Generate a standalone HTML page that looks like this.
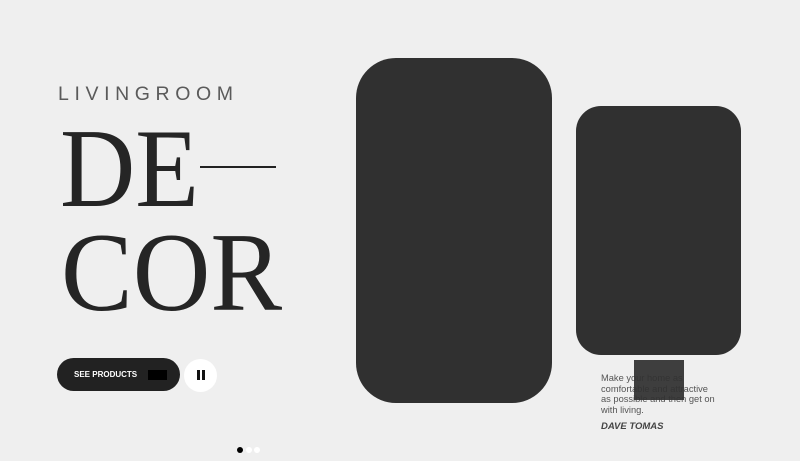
<!DOCTYPE html>
<html><head><meta charset="utf-8"><style>
*{margin:0;padding:0;box-sizing:border-box}
body{width:800px;height:461px;background:#efefef;position:relative;overflow:hidden;font-family:"Liberation Sans",sans-serif}
.a{position:absolute}
.liv{left:58px;top:83px;font-size:19.5px;letter-spacing:5.6px;color:#5a5a5a;white-space:nowrap;line-height:22px}
.big{font-family:"Liberation Serif",serif;font-size:112px;color:#252525;line-height:1;white-space:nowrap;transform-origin:0 0}
</style></head><body>
<div class="a liv">LIVINGROOM</div>
<div class="a big" style="left:60px;top:113px;transform:scaleX(0.93)">DE</div>
<div class="a" style="left:200px;top:166px;width:76px;height:2px;background:#222"></div>
<div class="a big" style="left:61px;top:217px;transform:scaleX(0.96)">COR</div>

<div class="a" style="left:57px;top:358px;width:123px;height:33px;border-radius:17px;background:#222"></div>
<div class="a" style="left:74px;top:370px;font-size:8px;font-weight:bold;color:#fff;line-height:9px">SEE PRODUCTS</div>
<div class="a" style="left:148px;top:370px;width:19px;height:10px;background:#000"></div>
<div class="a" style="left:184px;top:359px;width:33px;height:33px;border-radius:50%;background:#fff"></div>
<div class="a" style="left:197px;top:370px;width:2.5px;height:10px;background:#111"></div>
<div class="a" style="left:202px;top:370px;width:2.5px;height:10px;background:#111"></div>

<div class="a" style="left:237px;top:447px;width:6px;height:6px;border-radius:50%;background:#000"></div>
<div class="a" style="left:246px;top:447px;width:6px;height:6px;border-radius:50%;background:#fff"></div>
<div class="a" style="left:254px;top:447px;width:6px;height:6px;border-radius:50%;background:#fff"></div>

<div class="a" style="left:356px;top:58px;width:196px;height:345px;border-radius:40px;background:#303030"></div>
<div class="a" style="left:576px;top:106px;width:165px;height:249px;border-radius:25px;background:#303030"></div>

<div class="a" style="left:601px;top:373px;font-size:9.3px;line-height:10.5px;color:#555;width:116px">Make your home as comfortable and attractive as possible and then get on with living.</div>
<div class="a" style="left:601px;top:421px;font-size:9.5px;font-weight:bold;font-style:italic;color:#444">DAVE TOMAS</div>
<div class="a" style="left:634px;top:360px;width:50px;height:40px;background:#303030;opacity:0.93"></div>
</body></html>
